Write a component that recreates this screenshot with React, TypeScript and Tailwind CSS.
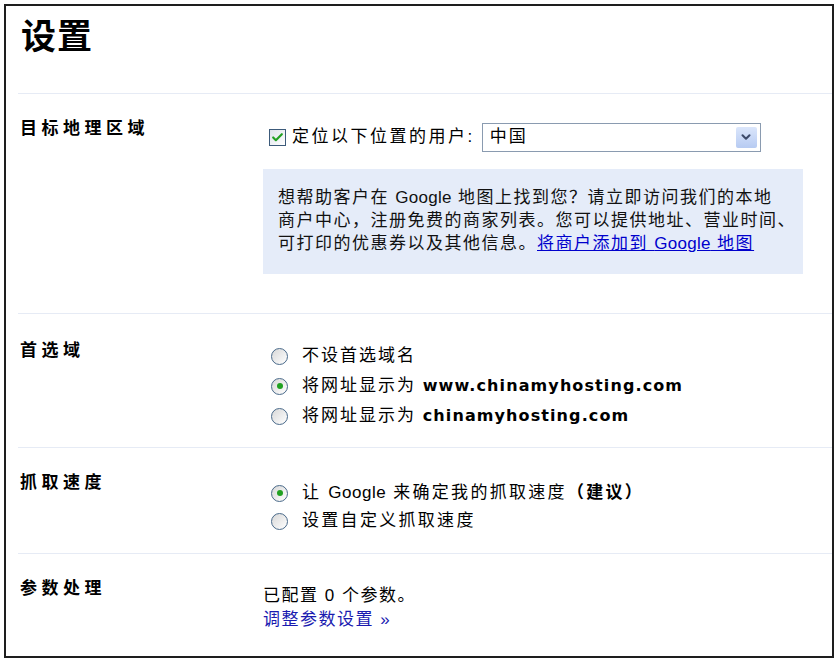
import { ChevronDown, Check } from 'lucide-react';

const font = { fontFamily: '"Liberation Sans", "Noto Sans CJK SC", sans-serif' };
const wide = { fontFamily: '"DejaVu Sans", "Noto Sans CJK SC", sans-serif' };

const Radio = ({ checked }: { checked?: boolean }) => (
  <span className="mr-[14px] flex h-[17px] w-[17px] shrink-0 items-center justify-center rounded-full border border-[#4a6a8a] bg-gradient-to-br from-[#d8d8d8] to-white">
    {checked && <span className="h-[6px] w-[6px] rounded-full bg-[#21a121]" />}
  </span>
);

const Row = ({ label, children, className }: { label: string; children: React.ReactNode; className?: string }) => (
  <div className={`flex border-t border-[#e6ebf5] ${className ?? ''}`}>
    <div className="w-[245px] shrink-0 pl-[2px] text-[17px] font-bold leading-[20px] tracking-[4.5px] text-black">{label}</div>
    <div className="flex-1">{children}</div>
  </div>
);

export default function App() {
  return (
    <div className="h-[662px] w-[838px] bg-white pl-[4px] pt-[4px]" style={font}>
      <div className="h-[654px] w-[830px] border-2 border-[#1e1e1e] pl-[12px]">
        <h1 className="h-[87px] pl-[3px] pt-[11px] text-[35px] font-bold leading-[40px] tracking-[1px] text-black">设置</h1>

        <Row label="目标地理区域" className="h-[220px] pt-[25px]">
          <div className="-mt-[25px] pt-[28px]">
            <div className="flex h-[30px] items-center text-[17px] text-black">
              <span className="ml-[6px] mr-[6px] flex h-[17px] w-[17px] items-center justify-center border border-[#3c5a7a] bg-gradient-to-br from-[#dde2ea] to-white">
                <Check className="h-[13px] w-[13px] text-[#22a022]" strokeWidth={4} />
              </span>
              <span className="tracking-[2.5px]">定位以下位置的用户:</span>
              <div className="ml-[7px] flex h-[29px] w-[279px] items-center justify-between border border-[#8a9bb0] pl-[7px] pr-[3px] tracking-[2px]">
                <span>中国</span>
                <span className="flex h-[21px] w-[21px] items-center justify-center rounded-[2px] bg-gradient-to-b from-[#dbe6fb] to-[#b7cbf2]">
                  <ChevronDown className="h-[14px] w-[14px] text-[#3c4a6a]" strokeWidth={3.5} />
                </span>
              </div>
            </div>
            <div className="mt-[17px] h-[105px] w-[540px] bg-[#e5ecf9] pl-[15px] pt-[17px] text-[17px] leading-[23px] tracking-[1.5px] text-[#111]">
              想帮助客户在 <span className="tracking-[0.3px]">Google</span> 地图上找到您？请立即访问我们的本地
              <br />
              商户中心，注册免费的商家列表。您可以提供地址、营业时间、
              <br />
              可打印的优惠券以及其他信息。
              <a className="text-[#0000cc] underline">将商户添加到 <span className="tracking-[0.3px]">Google</span> 地图</a>
            </div>
          </div>
        </Row>

        <Row label="首选域" className="h-[134px] pt-[27px]">
          <div className="text-[17px] tracking-[2px] text-black">
            <div className="flex h-[30px] items-center pl-[8px]">
              <Radio />
              <span>不设首选域名</span>
            </div>
            <div className="flex h-[30px] items-center pl-[8px]">
              <Radio checked />
              <span>将网址显示为 <b className="text-[16px] tracking-[1.1px]" style={wide}>www.chinamyhosting.com</b></span>
            </div>
            <div className="flex h-[30px] items-center pl-[8px]">
              <Radio />
              <span>将网址显示为 <b className="text-[16px] tracking-[1.1px]" style={wide}>chinamyhosting.com</b></span>
            </div>
          </div>
        </Row>

        <Row label="抓取速度" className="h-[106px] pt-[25px]">
          <div className="pt-[6px] text-[17px] tracking-[2.3px] text-black">
            <div className="flex h-[28px] items-center pl-[8px]">
              <Radio checked />
              <span>让 <span className="tracking-[0.5px]">Google</span> 来确定我的抓取速度<b>（建议）</b></span>
            </div>
            <div className="flex h-[28px] items-center pl-[8px]">
              <Radio />
              <span>设置自定义抓取速度</span>
            </div>
          </div>
        </Row>

        <Row label="参数处理" className="h-[104px] pt-[25px]">
          <div className="-mt-[20px] pt-[25px] text-[17px] leading-[24px] tracking-[1.5px] text-black">
            <div>已配置 0 个参数。</div>
            <a className="text-[#1a1ab0]">调整参数设置 »</a>
          </div>
        </Row>
      </div>
    </div>
  );
}
